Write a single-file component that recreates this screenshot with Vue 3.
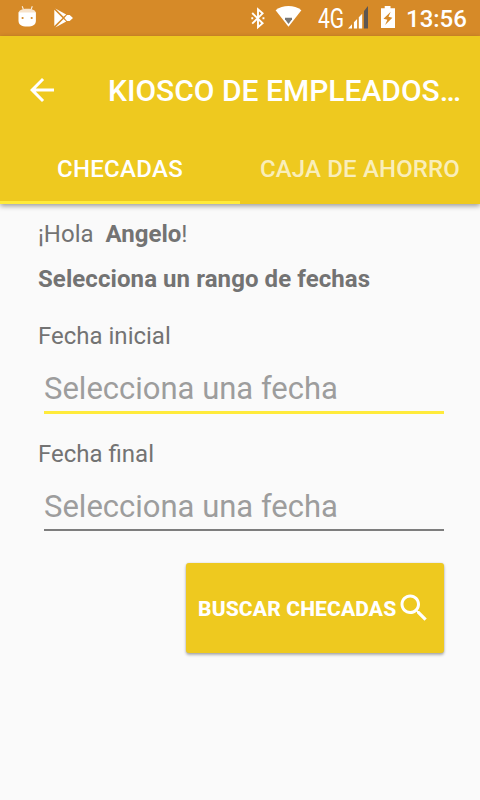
<script setup>
import { ref } from 'vue'

const tabs = [
  { id: 'checadas', label: 'CHECADAS' },
  { id: 'caja', label: 'CAJA DE AHORRO' },
]
const active = ref('checadas')
const fields = [
  { id: 'inicio', label: 'Fecha inicial', focused: true },
  { id: 'fin', label: 'Fecha final', focused: false },
]
</script>

<template>
  <div class="screen">
    <div class="status">
      <svg class="notices" width="80" height="36" viewBox="0 0 80 36">
        <path d="M22.200 6.200l1.300 3.600M32.300 6.200l-1.300 3.600" stroke="#fff" stroke-opacity=".85" stroke-width="1.100" />
        <path d="M18.500 13c.3-2.500 3-4.300 8.700-4.300s8.400 1.800 8.700 4.300z" fill="#f7e3cb" />
        <path d="M18.500 12.500h17.400v8c0 4.300-2.700 6-8.700 6s-8.700-1.700-8.700-6z" fill="#fff" />
        <circle cx="22.600" cy="18" r="1.100" fill="#d68a28" />
        <circle cx="31.700" cy="18" r="1.100" fill="#d68a28" />
        <path d="M54.300 9.800v16.300l8.200-8.100zM55.300 8.500l8.200 8.300 2.700-2.300zM55.300 27.400l8.200-8.300 2.700 2.300zM64.400 18l2.600-2.900h2.700l3.300 2.900-3.300 2.900H67z" fill="#fff" />
      </svg>
      <div class="signals">
        <svg width="68" height="36" viewBox="0 0 68 36">
          <path d="M12.200 13l10.400 10.300-4.600 3.900V9.300l4.600 4L12.200 23.700" fill="none" stroke="#fff" stroke-width="1.900" />
          <path d="M11.300 17.300h1.900v1.900h-1.900zM22.500 17.300h1.900v1.900h-1.900z" fill="#fff" />
          <path d="M35.600 10.200C39.500 7.300 43.700 6 48.500 6s9 1.300 12.900 4.200L48.500 26.700z" fill="#fff" />
          <path d="M45 17.800h7v1.500L48.500 24 45 19.300z" fill="#777" />
        </svg>
        <span class="network">4G</span>
        <svg width="60" height="36" viewBox="0 0 60 36">
          <path d="M8 28.500l4-4.300v4.300zM13.900 22.300l3.200-3.300v9.500h-3.200zM18.800 17.200l3.400-3.500v14.800h-3.400z" fill="#fff" />
          <path d="M24 11.100l4-5.100v22.500h-4z" fill="#5d5652" />
          <path d="M41 8.200h3.700V6h5.800v2.200H55V28H41z" fill="#fff" />
          <path d="M50.700 11.700l-7.200 7.100 3.900.9-2.300 5.400 7.300-7.400-3.900-1z" fill="#d68a28" />
        </svg>
        <span class="clock">13:56</span>
      </div>
    </div>

    <header class="appbar">
      <div class="toolbar">
        <svg class="back" width="36" height="36" viewBox="0 0 24 24">
          <path d="M20 11H7.830l5.590-5.590L12 4l-8 8 8 8 1.410-1.410L7.830 13H20v-2z" fill="#fff" />
        </svg>
        <h1>KIOSCO DE EMPLEADOS…</h1>
      </div>
      <nav class="tabs">
        <button
          v-for="tab in tabs"
          :key="tab.id"
          class="tab"
          :class="{ active: active === tab.id }"
          @click="active = tab.id"
        >{{ tab.label }}</button>
      </nav>
    </header>

    <main>
      <p class="hello"><span>¡Hola</span><span class="who"><b>Angelo</b>!</span></p>
      <h2>Selecciona un rango de fechas</h2>
      <label v-for="f in fields" :key="f.id" class="field" :class="{ focused: f.focused }">
        <span>{{ f.label }}</span>
        <input type="text" placeholder="Selecciona una fecha" readonly />
      </label>
      <button class="search">
        <span>BUSCAR CHECADAS</span>
        <svg width="36" height="36" viewBox="0 0 24 24">
          <path d="M15.500 14h-.790l-.280-.270C15.410 12.590 16 11.110 16 9.500 16 5.910 13.090 3 9.500 3S3 5.910 3 9.500 5.910 16 9.500 16c1.610 0 3.090-.590 4.230-1.570l.270.280v.790l5 4.990L20.490 19l-4.990-5zm-6 0C7.010 14 5 11.990 5 9.500S7.010 5 9.500 5 14 7.010 14 9.500 11.990 14 9.500 14z" fill="#fff" />
        </svg>
      </button>
    </main>
  </div>
</template>

<style>
body {
  margin: 0;
  background: #fafafa;
}
</style>

<style scoped>
.screen {
  width: 480px;
  height: 800px;
  overflow: hidden;
  display: flex;
  flex-direction: column;
  background: #fafafa;
  color: #737373;
  font-family: Roboto, sans-serif;
}
.screen * {
  box-sizing: border-box;
}
button {
  border: 0;
  padding: 0;
  font-family: inherit;
  color: #fff;
}
svg {
  display: block;
  flex: none;
}
.status {
  height: 36px;
  flex: none;
  display: flex;
  justify-content: space-between;
  background: #d68a28;
  color: #fff;
}
.signals {
  display: flex;
  padding-right: 12px;
}
.network {
  width: 22px;
  margin-left: 10px;
  font-size: 27px;
  line-height: 38px;
  font-weight: 400;
  transform: scaleX(0.78);
  transform-origin: left;
  white-space: nowrap;
}
.clock {
  width: 62px;
  margin-left: 6px;
  font-size: 24px;
  line-height: 38px;
  font-weight: 500;
  white-space: nowrap;
}
.appbar {
  height: 168px;
  flex: none;
  background: #eec91f;
  box-shadow: 0 2px 5px rgba(0, 0, 0, 0.38);
}
.toolbar {
  height: 96px;
  display: flex;
  padding-left: 24px;
}
.back {
  margin-top: 36px;
}
h1 {
  margin: 37px 0 0 48px;
  color: #fff;
  font-size: 30px;
  line-height: 36px;
  font-weight: 500;
  white-space: nowrap;
}
.tabs {
  display: grid;
  grid-template-columns: 1fr 1fr;
  height: 72px;
}
.tab {
  background: none;
  border-bottom: 3px solid transparent;
  padding-top: 5px;
  font-size: 24px;
  font-weight: 500;
  letter-spacing: 0.15px;
  white-space: nowrap;
  color: rgba(255, 255, 255, 0.7);
}
.tab.active {
  letter-spacing: 0.3px;
  color: #fff;
  border-bottom-color: #ffeb3b;
}
main {
  display: flex;
  flex-direction: column;
  padding: 16px 36px 0 38px;
  font-size: 24px;
  line-height: 28px;
}
.hello {
  display: flex;
  gap: 12px;
  margin: 0;
}
h2 {
  margin: 17px 0 29px;
  font-size: 24px;
  line-height: 28px;
  font-weight: 700;
  letter-spacing: 0.08px;
}
.field {
  display: flex;
  flex-direction: column;
  height: 118px;
}
input {
  margin: 21px 0 0 6px;
  padding: 0;
  width: 400px;
  height: 42px;
  border: 0;
  border-bottom: 2px solid #7d7d7d;
  padding-bottom: 5px;
  outline: 0;
  background: none;
  font: 400 31px/35px Roboto, sans-serif;
}
.focused input {
  height: 43px;
  border-bottom: 3px solid #ffeb3b;
}
input::placeholder {
  color: #9d9d9d;
  opacity: 1;
}
.search {
  align-self: flex-end;
  margin-top: 5px;
  width: 258px;
  height: 90px;
  padding-left: 12px;
  display: flex;
  align-items: center;
  border-radius: 3px;
  background: #eec91f;
  box-shadow: 0 2px 3px rgba(0, 0, 0, 0.3), 0 0 2px rgba(0, 0, 0, 0.14);
  font-size: 21px;
  font-weight: 800;
  letter-spacing: 0.15px;
  text-align: left;
  white-space: nowrap;
}
.search span {
  width: 197.500px;
  padding-top: 2px;
}
</style>
